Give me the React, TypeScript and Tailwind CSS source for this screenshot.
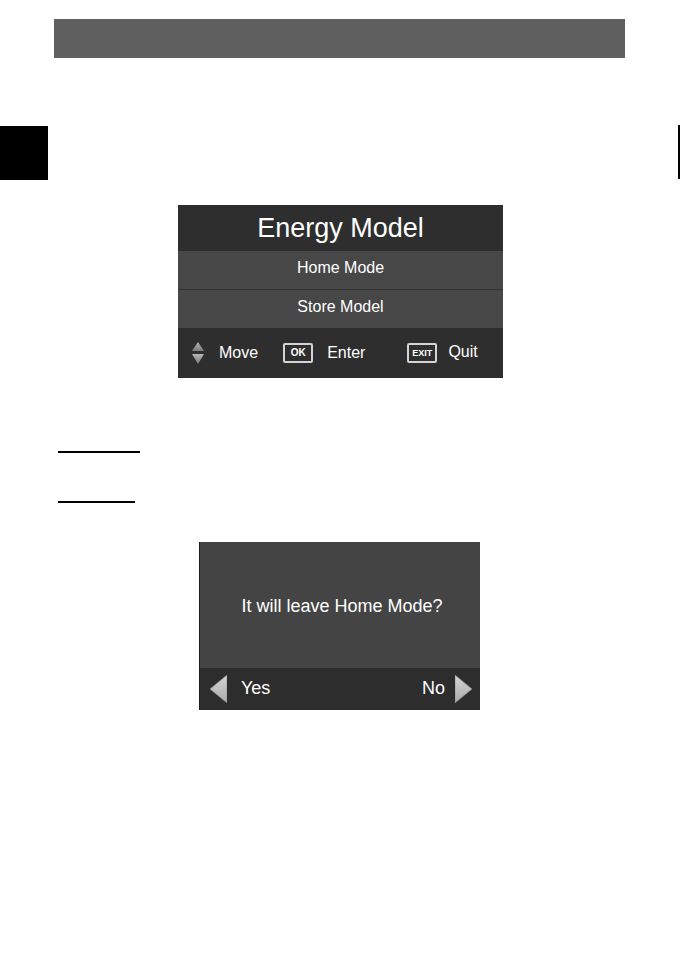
const UpDown = () => (
  <svg width="12" height="22" viewBox="0 0 12 22">
    <defs>
      <linearGradient id="ud" x1="0" y1="0" x2="0" y2="1">
        <stop offset="0" stopColor="#b4b4b4" />
        <stop offset="1" stopColor="#7c7c7c" />
      </linearGradient>
    </defs>
    <polygon points="6,0 12,9 0,9" fill="url(#ud)" />
    <polygon points="0,12 12,12 6,22" fill="url(#ud)" />
  </svg>
);

const Arrow = ({ dir }: { dir: "left" | "right" }) => (
  <svg width="17" height="28" viewBox="0 0 17 28">
    <defs>
      <linearGradient id={`ar-${dir}`} x1="0" y1="0" x2="0" y2="1">
        <stop offset="0" stopColor="#d6d6d6" />
        <stop offset="1" stopColor="#a9a9a9" />
      </linearGradient>
    </defs>
    {dir === "left" ? (
      <polygon points="17,0 17,28 0,14" fill={`url(#ar-${dir})`} stroke="#8a8a8a" strokeWidth="0.6" />
    ) : (
      <polygon points="0,0 17,14 0,28" fill={`url(#ar-${dir})`} stroke="#8a8a8a" strokeWidth="0.6" />
    )}
  </svg>
);

const KeyBox = ({ label, size }: { label: string; size: string }) => (
  <div
    className={`w-[30px] h-[20px] border-2 border-[#d4d4d4] rounded-[2px] flex items-center justify-center font-bold text-white leading-none ${size}`}
  >
    {label}
  </div>
);

export default function App() {
  return (
    <div className="w-[681px] h-[965px] bg-white font-['Liberation_Sans',Arial,sans-serif] pt-[19px]">
      {/* page header bar */}
      <div className="ml-[54px] w-[571px] h-[39px] bg-[#5f5f5f]" />

      {/* section tab + edge mark */}
      <div className="mt-[67px] h-[55px] flex justify-between">
        <div className="mt-[1px] w-[48px] h-[54px] bg-black" />
        <div className="w-[2px] h-[54px] bg-black mr-[1px]" />
      </div>

      {/* Energy Model menu */}
      <div className="mt-[25px] ml-[178px] w-[325px] text-white">
        <div className="h-[46px] bg-[#2e2e2e] flex items-center justify-center text-[27px] leading-none">
          Energy Model
        </div>
        <div className="h-[38px] bg-[#474747] flex items-center justify-center text-[16px] pb-[5px]">
          Home Mode
        </div>
        <div className="h-px bg-[#333333]" />
        <div className="h-[38px] bg-[#474747] flex items-center justify-center text-[16px] pb-[4px]">
          Store Model
        </div>
        <div className="h-[50px] bg-[#2e2e2e] flex items-center pl-[14px] text-[16px]">
          <UpDown />
          <span className="ml-[15px]">Move</span>
          <div className="ml-[25px]">
            <KeyBox label="OK" size="text-[10px]" />
          </div>
          <span className="ml-[14px]">Enter</span>
          <div className="ml-[42px]">
            <KeyBox label="EXIT" size="text-[9px]" />
          </div>
          <span className="ml-[11px] mb-[3px]">Quit</span>
        </div>
      </div>

      {/* underlined headings */}
      <div className="mt-[73px] ml-[58px] w-[82px] h-[2px] bg-black" />
      <div className="mt-[48px] ml-[58px] w-[77px] h-[1.5px] bg-black" />

      {/* confirm dialog */}
      <div className="mt-[39px] ml-[199px] w-[281px] border-l border-[#1c1c1c] text-white">
        <div className="h-[126px] bg-[#444444] flex items-center justify-center text-[18px] pl-[4px] pt-[3px]">
          It will leave Home Mode?
        </div>
        <div className="h-[42px] bg-[#2d2d2d] flex items-center pl-[10px] pr-[8px] text-[18px]">
          <Arrow dir="left" />
          <span className="ml-[14px]">Yes</span>
          <span className="ml-auto">No</span>
          <span className="ml-[10px] flex">
            <Arrow dir="right" />
          </span>
        </div>
      </div>
    </div>
  );
}
